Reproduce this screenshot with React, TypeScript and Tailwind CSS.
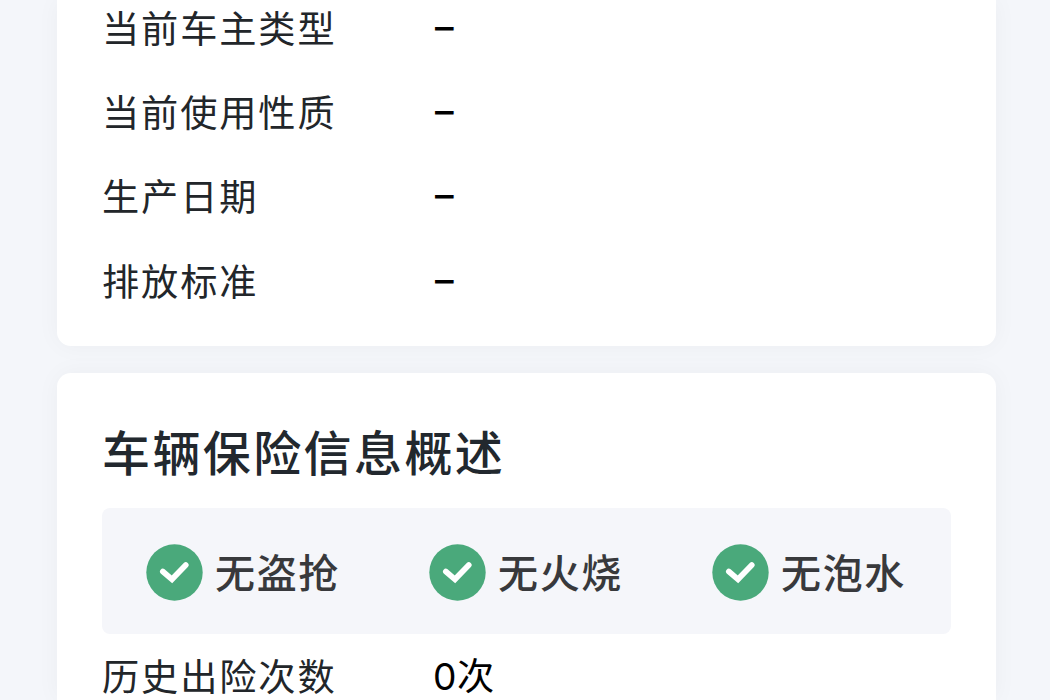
import type { ReactNode } from 'react'
import clsx from 'clsx'

const details = [
  { label: '当前车主类型', value: '-' },
  { label: '当前使用性质', value: '-' },
  { label: '生产日期', value: '-' },
  { label: '排放标准', value: '-' },
]

const checks = ['无盗抢', '无火烧', '无泡水']

function CheckBadge() {
  return (
    <svg className="w-[57px] h-[57px] shrink-0" viewBox="0 0 57 57" fill="none">
      <circle cx="28.5" cy="28.5" r="28.2" fill="#4aa97b" />
      <path
        d="M16.8 27.5L26 35.3L39.8 21"
        stroke="#fff"
        strokeWidth="5.6"
        strokeLinecap="round"
        strokeLinejoin="miter"
      />
    </svg>
  )
}

function InfoRow({ label, value }: { label: string; value: string }) {
  const isEmpty = value === '-'

  return (
    <div className="flex items-center h-[84.3px] text-[37.2px] leading-[40px] tracking-[1.9px] whitespace-nowrap">
      <span className="w-[331px] shrink-0 pb-px text-[#22262a]">{label}</span>
      {isEmpty ? (
        <span className="pl-[2px] pb-px text-black font-medium font-['Inter','Noto_Sans_CJK_SC',sans-serif]">–</span>
      ) : (
        <span className="pt-[3px] text-black tracking-[0.5px] font-['Inter','Noto_Sans_CJK_SC',sans-serif]">{value}</span>
      )}
    </div>
  )
}

function Card({ className, children }: { className?: string; children: ReactNode }) {
  return (
    <section
      className={clsx(
        'bg-white px-[45px] shadow-[0_0_24px_rgba(0,0,0,0.04)]',
        className
      )}
    >
      {children}
    </section>
  )
}

function App() {
  return (
    <div className="h-[700px] overflow-hidden bg-[#f4f6fa] pl-[57px] pr-[54px] flex flex-col gap-[27px] font-['Noto_Sans_CJK_SC',sans-serif]">

      {/* Vehicle details */}
      <Card className="h-[346px] shrink-0 rounded-b-[14px]">
        <div className="-mt-[15px]">
          {details.map(row => (
            <InfoRow key={row.label} label={row.label} value={row.value} />
          ))}
        </div>
      </Card>

      {/* Insurance overview */}
      <Card className="h-[327px] shrink-0 rounded-t-[14px] pt-[41px]">
        <h2 className="h-[72px] leading-[72px] text-[48px] tracking-[2.4px] font-medium text-[#22282e] whitespace-nowrap">
          车辆保险信息概述
        </h2>

        <div className="mt-[22px] h-[126px] rounded-lg bg-[#f5f6fa] grid grid-cols-3">
          {checks.map(name => (
            <div key={name} className="flex items-center justify-center gap-3 pr-px pt-[3px]">
              <CheckBadge />
              <span className="text-[40px] leading-[57px] tracking-[1.7px] pb-[3px] font-medium text-[#38393c] whitespace-nowrap">
                {name}
              </span>
            </div>
          ))}
        </div>

        <div className="-mt-px">
          <InfoRow label="历史出险次数" value="0次" />
        </div>
      </Card>
    </div>
  )
}

export default App
